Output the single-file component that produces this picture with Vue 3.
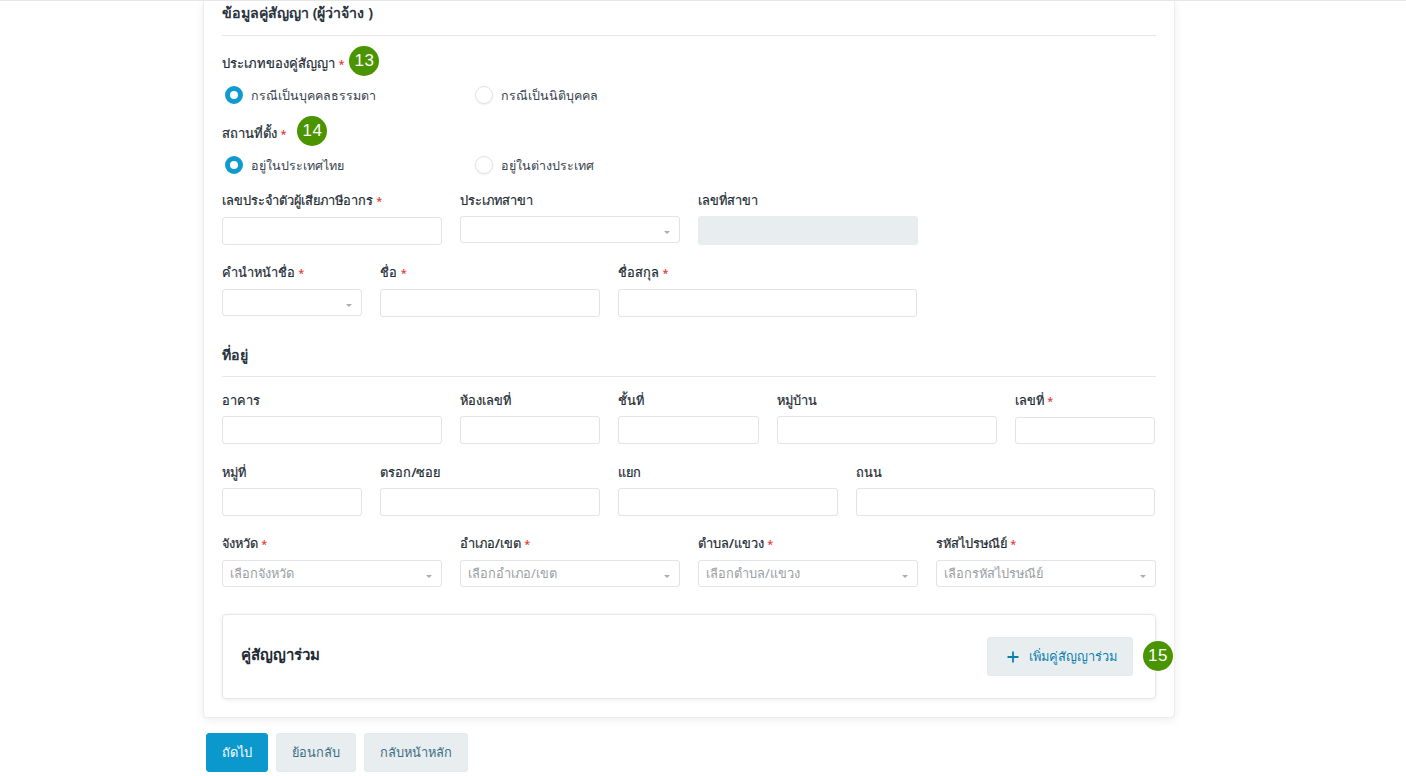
<script setup>
const row1 = [
  { label: 'เลขประจำตัวผู้เสียภาษีอากร', req: true, span: 3, type: 'input' },
  { label: 'ประเภทสาขา', span: 3, type: 'select', raised: true },
  { label: 'เลขที่สาขา', span: 3, type: 'disabled', raised: true },
]
const row2 = [
  { label: 'คำนำหน้าชื่อ', req: true, span: 2, type: 'select' },
  { label: 'ชื่อ', req: true, span: 3, type: 'input' },
  { label: 'ชื่อสกุล', req: true, span: 4, type: 'input' },
]
const row3 = [
  { label: 'อาคาร', span: 3, type: 'input' },
  { label: 'ห้องเลขที่', span: 2, type: 'input' },
  { label: 'ชั้นที่', span: 2, type: 'input' },
  { label: 'หมู่บ้าน', span: 3, type: 'input' },
  { label: 'เลขที่', req: true, span: 2, type: 'input', lowered: true },
]
const row4 = [
  { label: 'หมู่ที่', span: 2, type: 'input' },
  { label: 'ตรอก/ซอย', span: 3, type: 'input' },
  { label: 'แยก', span: 3, type: 'input' },
  { label: 'ถนน', span: 4, type: 'input' },
]
const row5 = [
  { label: 'จังหวัด', req: true, span: 3, type: 'select', ph: 'เลือกจังหวัด' },
  { label: 'อำเภอ/เขต', req: true, span: 3, type: 'select', ph: 'เลือกอำเภอ/เขต' },
  { label: 'ตำบล/แขวง', req: true, span: 3, type: 'select', ph: 'เลือกตำบล/แขวง' },
  { label: 'รหัสไปรษณีย์', req: true, span: 3, type: 'select', ph: 'เลือกรหัสไปรษณีย์' },
]
const topRows = [
  { fields: row1, narrow: false },
  { fields: row2, narrow: true },
]
const addrRows = [
  { fields: row3, compact: true, slim: true },
  { fields: row4, compact: true, narrow: true },
  { fields: row5, compact: false, narrow: false },
]
</script>

<template>
  <div class="page">
    <main class="card">
      <h2 class="section first">ข้อมูลคู่สัญญา (ผู้ว่าจ้าง )</h2>

      <div class="label-line l13">
        <span class="lab">ประเภทของคู่สัญญา <em>*</em></span>
        <span class="badge">13</span>
      </div>
      <div class="radios">
        <label class="radio"><i class="dot on"></i><span class="rt">กรณีเป็นบุคคลธรรมดา</span></label>
        <label class="radio"><i class="dot"></i><span class="rt">กรณีเป็นนิติบุคคล</span></label>
      </div>

      <div class="label-line l14">
        <span class="lab">สถานที่ตั้ง <em>*</em></span>
        <span class="badge">14</span>
      </div>
      <div class="radios">
        <label class="radio"><i class="dot on"></i><span class="rt">อยู่ในประเทศไทย</span></label>
        <label class="radio"><i class="dot"></i><span class="rt">อยู่ในต่างประเทศ</span></label>
      </div>

      <div class="rows top">
        <div v-for="(r, i) in topRows" :key="i" class="grid" :class="{ narrow: r.narrow }">
          <div v-for="f in r.fields" :key="f.label" class="field" :class="'s' + f.span">
            <span class="lab">{{ f.label }} <em v-if="f.req">*</em></span>
            <div v-if="f.type === 'select'" class="select" :class="{ raised: f.raised }">
              <span>{{ f.ph }}</span><b class="caret"></b>
            </div>
            <div v-else class="input" :class="{ disabled: f.type === 'disabled', raised: f.raised }"></div>
          </div>
        </div>
      </div>

      <h2 class="section addr">ที่อยู่</h2>

      <div class="rows">
        <div v-for="(r, i) in addrRows" :key="i" class="grid" :class="{ compact: r.compact, narrow: r.narrow, slim: r.slim }">
          <div v-for="f in r.fields" :key="f.label" class="field" :class="'s' + f.span">
            <span class="lab">{{ f.label }} <em v-if="f.req">*</em></span>
            <div v-if="f.type === 'select'" class="select">
              <span>{{ f.ph }}</span><b class="caret"></b>
            </div>
            <div v-else class="input" :class="{ lowered: f.lowered }"></div>
          </div>
        </div>
      </div>

      <section class="sub">
        <strong>คู่สัญญาร่วม</strong>
        <button class="btn add" type="button">
          <svg width="12" height="12" viewBox="0 0 12 12"><path d="M6 .5v11M.5 6h11" stroke="#0a7fae" stroke-width="1.8" fill="none"/></svg>
          เพิ่มคู่สัญญาร่วม
        </button>
        <span class="badge b15">15</span>
      </section>
    </main>

    <footer class="actions">
      <button class="btn primary" type="button">ถัดไป</button>
      <button class="btn" type="button">ย้อนกลับ</button>
      <button class="btn" type="button">กลับหน้าหลัก</button>
    </footer>
  </div>
</template>

<style>
html, body { margin: 0; background: #fff; }
</style>

<style scoped>
.page {
  height: 776px;
  overflow: hidden;
  box-sizing: border-box;
  border-top: 1px solid #e6e6e6;
  font-family: "Noto Sans", "Open Sans", Roboto, sans-serif;
  font-size: 13px;
  color: #2b3440;
}
.card {
  box-sizing: border-box;
  width: 972px;
  height: 718px;
  margin: -1px 0 0 203px;
  padding: 1px 18px 0;
  background: #fff;
  border: 1px solid #ececec;
  border-top: 0;
  border-radius: 0 0 4px 4px;
  box-shadow: 0 2px 10px rgba(0, 0, 0, .07);
}
.section {
  margin: 0;
  font-size: 14.2px;
  font-weight: 700;
  color: #2b3440;
  border-bottom: 1px solid #e4e6e8;
  height: 34px;
  line-height: 24px;
}
.section.addr { margin-top: 27px; height: 32px; line-height: 22px; }
.label-line { display: flex; align-items: center; height: 30px; }
.l13 { margin-top: 10px; }
.l14 { margin-top: 6px; }
.l13 .badge { margin-left: 5px; }
.l14 .badge { margin-left: 11px; }
.label-line .lab { padding-top: 4px; font-size: 13px; }
.lab { font-weight: 500; line-height: 18px; white-space: nowrap; font-size: 12.8px; color: #222a33; -webkit-text-stroke: .2px #222a33; }
em { color: #e53935; font-style: normal; font-size: 11px; line-height: 0; -webkit-text-stroke: 0; }
.radios { display: flex; height: 30px; margin-top: 4px; padding-left: 3px; align-items: center; }
.radio { display: flex; align-items: center; gap: 8px; width: 250px; color: #3a4450; font-size: 12.5px; }
.rt { padding-top: 2px; }
.dot {
  box-sizing: border-box;
  width: 18px;
  height: 18px;
  border-radius: 50%;
  border: 1px solid #e2e2e2;
  box-shadow: 0 1px 2px rgba(0, 0, 0, .08);
}
.dot.on { border: 5px solid #0f9bd0; background: #fff; box-shadow: none; }
.badge {
  display: flex;
  align-items: center;
  justify-content: center;
  flex: none;
  width: 30px;
  height: 30px;
  border-radius: 50%;
  background: #4a9400;
  color: #fff;
  font: 17px "Liberation Sans", sans-serif;
  letter-spacing: .5px;
}
.rows { display: flex; flex-direction: column; gap: 18px; }
.rows.top { margin-top: 11px; }
.rows:not(.top) { margin-top: 13px; }
.grid { display: grid; grid-template-columns: repeat(12, minmax(0, 1fr)); column-gap: 18px; }
.grid.narrow { padding-right: 1.1px; }
.grid.slim { padding-right: .6px; }
.s2 { grid-column: span 2; }
.s3 { grid-column: span 3; }
.s4 { grid-column: span 4; }
.field { display: flex; flex-direction: column; gap: 8px; height: 54px; }
.compact .field { gap: 7px; }
.compact .lab { padding-top: 1px; }
.raised { margin-top: -1px; }
.lowered { margin-top: 1px; }
.input {
  box-sizing: border-box;
  height: 29px;
  background: #fff;
  border: 1px solid #e1e3e8;
  border-radius: 3px;
}
.input.disabled { background: #e8eef0; border-color: #e8eef0; }
.select {
  box-sizing: border-box;
  height: 27px;
  display: flex;
  align-items: center;
  justify-content: space-between;
  padding: 0 9px 0 7px;
  border: 1px solid #e1e3e8;
  border-radius: 3px;
  color: #9aa0a6;
  background: #fff;
  font-size: 12.8px;
}
.caret {
  width: 0;
  height: 0;
  margin-top: 5px;
  border-left: 3px solid transparent;
  border-right: 3px solid transparent;
  border-top: 3px solid #a8adb3;
}
.sub {
  box-sizing: border-box;
  position: relative;
  display: flex;
  align-items: center;
  justify-content: space-between;
  height: 85px;
  margin-top: 26px;
  padding: 0 22px 0 18px;
  border: 1px solid #e6e7ea;
  border-radius: 4px;
  box-shadow: 0 1px 4px rgba(0, 0, 0, .08);
}
.sub strong { font-size: 15px; font-weight: 700; color: #222a33; margin-bottom: 3px; }
.btn {
  box-sizing: border-box;
  height: 39px;
  padding: 0 15px;
  border: 1px solid #e4eaed;
  border-radius: 3px;
  background: #e8eef0;
  color: #3d6d86;
  font: inherit;
  font-size: 12.8px;
  font-weight: 500;
  display: inline-flex;
  align-items: center;
}
.add { width: 146px; justify-content: center; gap: 10px; padding: 0 0 0 4px; color: #0a7fae; }
.b15 { position: absolute; right: -18px; top: 26px; }
.actions { display: flex; gap: 8px; margin: 15px 0 0 206px; }
.primary { background: #0b98cd; border-color: #0b98cd; color: #fff; }
</style>
